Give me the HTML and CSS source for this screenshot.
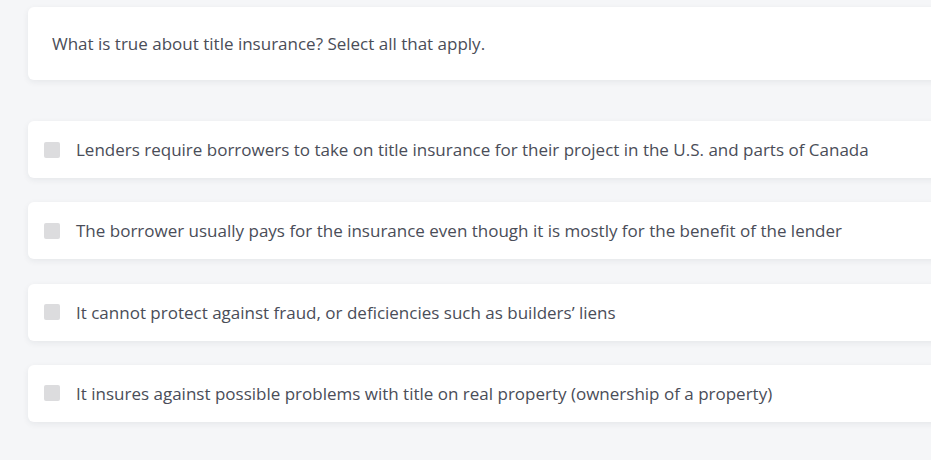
FILE: index.html
```html
<!DOCTYPE html>
<html>
<head>
<meta charset="utf-8">
<link rel="stylesheet" href="styles.css">
</head>
<body>
<div class="quiz">
  <div class="card question">What is true about title insurance? Select all that apply.</div>
  <div class="options">
    <label class="card option"><span class="box"></span><span class="text">Lenders require borrowers to take on title insurance for their project in the U.S. and parts of Canada</span></label>
    <label class="card option"><span class="box"></span><span class="text">The borrower usually pays for the insurance even though it is mostly for the benefit of the lender</span></label>
    <label class="card option"><span class="box"></span><span class="text">It cannot protect against fraud, or deficiencies such as builders’ liens</span></label>
    <label class="card option"><span class="box"></span><span class="text">It insures against possible problems with title on real property (ownership of a property)</span></label>
  </div>
</div>
</body>
</html>
```
FILE: styles.css
```css
html, body {
  margin: 0;
  padding: 0;
  background: #f5f6f8;
  overflow: hidden;
  width: 931px;
  height: 460px;
}
body {
  font-family: "Open Sans", "Liberation Sans", sans-serif;
  color: #4a4d58;
}
.quiz {
  padding: 7px 0 0 28px;
  width: 940px;
}
.card {
  background: #fff;
  border-radius: 6px;
  box-shadow: 0 2px 6px rgba(30, 40, 60, 0.07);
}
.question {
  height: 73px;
  box-sizing: border-box;
  padding: 0 24px;
  display: flex;
  align-items: center;
  font-size: 17px;
}
.options {
  margin-top: 41px;
  display: flex;
  flex-direction: column;
  gap: 24.33px;
}
.option {
  height: 57px;
  box-sizing: border-box;
  display: flex;
  align-items: center;
  padding: 0 16px;
  font-size: 17px;
}
.box {
  width: 16px;
  height: 16px;
  border-radius: 2px;
  background: #dcdcde;
  flex: none;
  margin-right: 16px;
}
.text {
  white-space: nowrap;
}
```
